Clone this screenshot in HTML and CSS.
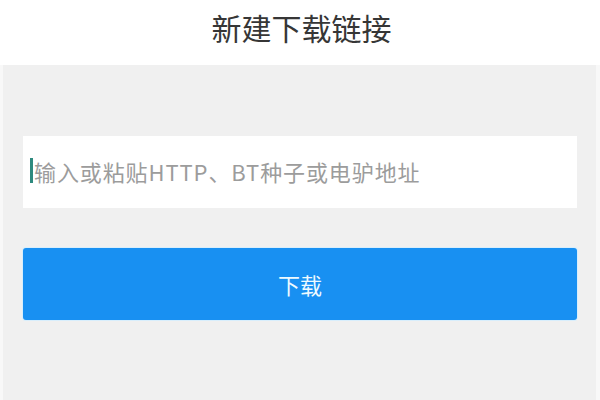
FILE: index.html
```html
<!DOCTYPE html>
<html lang="zh-CN">
<head>
<meta charset="utf-8">
<title>新建下载链接</title>
<link rel="stylesheet" href="styles.css">
</head>
<body>
<header class="header">
  <h1 class="title">新建下载链接</h1>
</header>
<main class="main">
  <div class="field">
    <span class="caret"></span>
    <span class="placeholder">输入或粘贴HTTP、BT种子或电驴地址</span>
  </div>
  <button class="btn" type="button">下载</button>
</main>
</body>
</html>
```

FILE: styles.css
```css
html, body {
  margin: 0;
  padding: 0;
  height: 100%;
  background: #ffffff;
  font-family: "Noto Sans CJK SC", "Noto Sans", sans-serif;
}

body {
  display: flex;
  flex-direction: column;
}

.header {
  height: 65px;
  display: flex;
  align-items: center;
  justify-content: center;
  background: #ffffff;
}

.title {
  margin: 0;
  font-size: 30px;
  font-weight: 400;
  color: #363636;
  line-height: 1;
  padding-left: 3px;
  padding-bottom: 12px;
}

.main {
  flex: 1;
  background: #f0f0f0;
  border-left: 3px solid #f8f8f8;
  border-right: 4px solid #f8f8f8;
  padding: 71px 19px 0 20px;
  display: flex;
  flex-direction: column;
  gap: 40px;
}

.field {
  height: 72px;
  background: #ffffff;
  display: flex;
  align-items: center;
  padding-left: 7px;
}

.caret {
  width: 3px;
  height: 25px;
  background: #2e8a7e;
  margin-right: 1px;
  margin-bottom: 4px;
}

.placeholder {
  font-size: 22px;
  color: #9c9c9c;
  line-height: 1;
  letter-spacing: 0.9px;
  margin-bottom: 3px;
}

.btn {
  height: 72px;
  border: 0;
  border-radius: 3px;
  background: #1890f2;
  color: #eefaff;
  font-family: "Noto Sans CJK SC", "Noto Sans", sans-serif;
  font-size: 22px;
  padding: 0;
  box-shadow: 0 0 0 1px #d8eefc;
}
```
